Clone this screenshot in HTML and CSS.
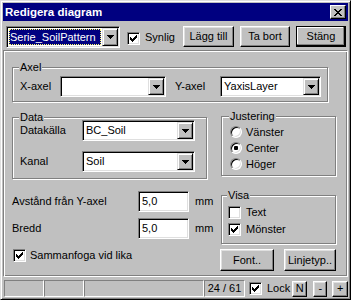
FILE: index.html
```html
<!DOCTYPE html>
<html lang="sv">
<head>
<meta charset="utf-8">
<title>Redigera diagram</title>
<link rel="stylesheet" href="styles.css">
</head>
<body>
<div class="window">
  <div class="titlebar">
    <span class="title">Redigera diagram</span>
    <span class="capbtn"><svg width="8" height="7" viewBox="0 0 8 7" shape-rendering="crispEdges"><path d="M0 0h2v1H0zM6 0h2v1H6zM1 1h2v1H1zM5 1h2v1H5zM2 2h4v1H2zM3 3h2v1H3zM2 4h4v1H2zM1 5h2v1H1zM5 5h2v1H5zM0 6h2v1H0zM6 6h2v1H6z"/></svg></span>
  </div>

  <div class="toolbar">
    <div class="combo combo-series">
      <span class="combo-text sel">Serie_SoilPattern</span>
      <span class="dd"><svg width="7" height="4" viewBox="0 0 7 4" shape-rendering="crispEdges"><path d="M0 0h7v1H0zM1 1h5v1H1zM2 2h3v1H2zM3 3h1v1H3z"/></svg></span>
    </div>
    <span class="cb cb-synlig"><svg width="7" height="7" viewBox="0 0 7 7" shape-rendering="crispEdges"><path d="M6 0h1v1H6zM5 1h2v1H5zM0 2h1v1H0zM4 2h3v1H4zM0 3h2v1H0zM3 3h3v1H3zM0 4h5v1H0zM1 5h3v1H1zM2 6h1v1H2z"/></svg></span>
    <span class="synlig-text">Synlig</span>
    <button class="btn btn-add">Lägg till</button>
    <button class="btn btn-del">Ta bort</button>
    <button class="btn btn-close default">Stäng</button>
  </div>

  <div class="panel">
    <div class="group g-axel">
      <div class="gtitle gt-axel">Axel</div>
      <div class="grow">
        <span class="lbl lbl-x">X-axel</span>
        <div class="combo c-x"><span class="combo-text"></span><span class="dd"><svg width="7" height="4" viewBox="0 0 7 4" shape-rendering="crispEdges"><path d="M0 0h7v1H0zM1 1h5v1H1zM2 2h3v1H2zM3 3h1v1H3z"/></svg></span></div>
        <span class="lbl lbl-y">Y-axel</span>
        <div class="combo c-y"><span class="combo-text">YaxisLayer</span><span class="dd"><svg width="7" height="4" viewBox="0 0 7 4" shape-rendering="crispEdges"><path d="M0 0h7v1H0zM1 1h5v1H1zM2 2h3v1H2zM3 3h1v1H3z"/></svg></span></div>
      </div>
    </div>

    <div class="row2">
      <div class="group g-data">
        <div class="gtitle gt-data">Data</div>
        <div class="grow">
          <span class="lbl lbl-data">Datakälla</span>
          <div class="combo c-data"><span class="combo-text">BC_Soil</span><span class="dd"><svg width="7" height="4" viewBox="0 0 7 4" shape-rendering="crispEdges"><path d="M0 0h7v1H0zM1 1h5v1H1zM2 2h3v1H2zM3 3h1v1H3z"/></svg></span></div>
        </div>
        <div class="grow grow-2">
          <span class="lbl lbl-data">Kanal</span>
          <div class="combo c-data"><span class="combo-text">Soil</span><span class="dd"><svg width="7" height="4" viewBox="0 0 7 4" shape-rendering="crispEdges"><path d="M0 0h7v1H0zM1 1h5v1H1zM2 2h3v1H2zM3 3h1v1H3z"/></svg></span></div>
        </div>
      </div>

      <div class="group g-just">
        <div class="gtitle gt-just">Justering</div>
        <div class="rrow"><span class="radio"></span><span class="rtext">Vänster</span></div>
        <div class="rrow"><span class="radio on"></span><span class="rtext">Center</span></div>
        <div class="rrow"><span class="radio"></span><span class="rtext">Höger</span></div>
      </div>
    </div>

    <div class="row3">
      <div class="leftcol">
        <div class="frow">
          <span class="flabel">Avstånd från Y-axel</span>
          <div class="field">5,0</div>
          <span class="unit">mm</span>
        </div>
        <div class="frow frow-2">
          <span class="flabel">Bredd</span>
          <div class="field">5,0</div>
          <span class="unit">mm</span>
        </div>
        <div class="crow">
          <span class="cb"><svg width="7" height="7" viewBox="0 0 7 7" shape-rendering="crispEdges"><path d="M6 0h1v1H6zM5 1h2v1H5zM0 2h1v1H0zM4 2h3v1H4zM0 3h2v1H0zM3 3h3v1H3zM0 4h5v1H0zM1 5h3v1H1zM2 6h1v1H2z"/></svg></span>
          <span class="ctext">Sammanfoga vid lika</span>
        </div>
      </div>

      <div class="rightcol">
        <div class="group g-visa">
          <div class="gtitle gt-visa">Visa</div>
          <div class="vrow"><span class="cb"></span><span class="vtext">Text</span></div>
          <div class="vrow"><span class="cb"><svg width="7" height="7" viewBox="0 0 7 7" shape-rendering="crispEdges"><path d="M6 0h1v1H6zM5 1h2v1H5zM0 2h1v1H0zM4 2h3v1H4zM0 3h2v1H0zM3 3h3v1H3zM0 4h5v1H0zM1 5h3v1H1zM2 6h1v1H2z"/></svg></span><span class="vtext">Mönster</span></div>
        </div>
        <div class="brow">
          <button class="btn btn-font">Font..</button>
          <button class="btn btn-line">Linjetyp..</button>
        </div>
      </div>
    </div>
  </div>

  <div class="statusbar">
    <span class="sp sp-1"></span>
    <span class="sp sp-2"></span>
    <span class="sp sp-3"></span>
    <span class="sp sp-4">24 / 61</span>
    <span class="cb cb-lock"><svg width="7" height="7" viewBox="0 0 7 7" shape-rendering="crispEdges"><path d="M6 0h1v1H6zM5 1h2v1H5zM0 2h1v1H0zM4 2h3v1H4zM0 3h2v1H0zM3 3h3v1H3zM0 4h5v1H0zM1 5h3v1H1zM2 6h1v1H2z"/></svg></span>
    <span class="lock-text">Lock</span>
    <button class="btn sbtn sb-n">N</button>
    <button class="btn sbtn sb-minus">-</button>
    <button class="btn sbtn sb-plus">+</button>
  </div>
</div>
</body>
</html>
```

FILE: styles.css
```css
* { box-sizing: border-box; }
html, body { margin: 0; padding: 0; }
body {
  background: #c0c0c0;
  font-family: "Liberation Sans", Arial, sans-serif;
  font-size: 11px;
  line-height: 13px;
  color: #000;
}

.window {
  width: 351px;
  height: 300px;
  border: 1px solid;
  border-color: #dfdfdf #000 #000 #dfdfdf;
  box-shadow: inset 1px 1px #fff, inset -1px -1px #808080;
  padding: 2px;
  display: flex;
  flex-direction: column;
  background: #c0c0c0;
}

/* title bar */
.titlebar {
  height: 18px;
  flex: none;
  background: #000080;
  color: #fff;
  display: flex;
  align-items: center;
  justify-content: space-between;
  padding: 0 2px 0 2px;
}
.title { font-weight: bold; font-size: 11.5px; }
.capbtn {
  width: 16px;
  height: 14px;
  background: #c0c0c0;
  border: 1px solid;
  border-color: #fff #000 #000 #fff;
  box-shadow: inset -1px -1px #808080;
  display: flex;
  align-items: center;
  justify-content: center;
}
svg { display: block; }

/* toolbar */
.toolbar {
  height: 29px;
  flex: none;
  display: flex;
  align-items: flex-start;
  padding: 5px 0 0 3px;
}

/* combo */
.combo {
  display: flex;
  height: 21px;
  flex: none;
  background: #fff;
  border: 1px solid;
  border-color: #808080 #fff #fff #808080;
  box-shadow: inset 1px 1px #000, inset -1px -1px #dfdfdf;
  padding: 1px;
}
.combo-text {
  flex: 1;
  display: flex;
  align-items: center;
  padding-left: 2px;
  white-space: nowrap;
  overflow: hidden;
}
.combo-text.sel {
  margin: 1px 1px 1px 1px;
  padding-left: 0;
  background: #000080;
  color: #fff;
  border: 1px dotted #ffff66;
}
.dd {
  width: 16px;
  flex: none;
  background: #c0c0c0;
  border: 1px solid;
  border-color: #dfdfdf #000 #000 #dfdfdf;
  box-shadow: inset 1px 1px #fff, inset -1px -1px #808080;
  display: flex;
  align-items: center;
  justify-content: center;
}
.combo-series { width: 114px; height: 22px; }
.c-x { width: 106px; }
.c-y { width: 101px; }
.c-data { width: 113px; }

/* checkbox */
.cb {
  width: 13px;
  height: 13px;
  flex: none;
  background: #fff;
  border: 1px solid;
  border-color: #808080 #fff #fff #808080;
  box-shadow: inset 1px 1px #000, inset -1px -1px #dfdfdf;
  display: flex;
  align-items: center;
  justify-content: center;
}
.cb-synlig { margin: 6px 0 0 7px; }
.synlig-text { margin: 5px 0 0 5px; line-height: 13px; }

/* radio */
.radio {
  width: 12px;
  height: 12px;
  flex: none;
  border-radius: 50%;
  background: #fff;
  border: 1px solid;
  border-color: #808080 #fff #fff #808080;
  box-shadow: inset 1px 1px #000, inset -1px -1px #dfdfdf;
  display: flex;
  align-items: center;
  justify-content: center;
}
.radio.on::after {
  content: "";
  width: 4px;
  height: 4px;
  border-radius: 1px;
  background: #000;
}

/* buttons */
.btn {
  font: inherit;
  color: #000;
  background: #c0c0c0;
  border: 1px solid;
  border-color: #fff #000 #000 #fff;
  box-shadow: inset -1px -1px #808080, inset 1px 1px #dfdfdf;
  padding: 0;
  height: 21px;
  flex: none;
  display: flex;
  align-items: center;
  justify-content: center;
}
.btn.default {
  border-color: #000;
  box-shadow: inset -1px -1px #000, inset -2px -2px #808080, inset 1px 1px #fff;
}
.btn-add { width: 51px; margin-left: 8px; }
.btn-del { width: 50px; margin-left: 6px; }
.btn-close { width: 50px; margin-left: 6px; }

/* main panel */
.panel {
  height: 227px;
  flex: none;
  border: 1px solid;
  border-color: #808080 #fff #fff #808080;
  box-shadow: inset 1px 1px #fff, inset -1px -1px #808080;
  padding: 16px 0 0 8px;
  display: flex;
  flex-direction: column;
  align-items: flex-start;
}

/* group boxes */
.group {
  flex: none;
  border: 1px solid #808080;
  box-shadow: inset 1px 1px #fff, 1px 1px #fff;
}
.gtitle {
  display: table;
  height: 13px;
  margin: -7px 0 0 -1px;
  padding: 0 1px;
  background: #c0c0c0;
}
.gt-axel { margin-bottom: 2px; }
.gt-data { margin-bottom: -4px; }
.gt-just { margin-bottom: 1px; }
.gt-visa { margin-bottom: 2px; }

.g-axel { width: 316px; height: 35px; padding: 0 0 0 7px; }
.grow { display: flex; align-items: center; height: 21px; }
.lbl-x { width: 40px; }
.lbl-y { width: 45px; margin-left: 9px; }

.row2 { display: flex; align-items: flex-start; margin-top: 14px; }
.g-data { width: 195px; height: 62px; margin-top: 1px; padding: 0 0 0 7px; }
.lbl-data { width: 62px; }
.grow-2 { margin-top: 10px; }

.g-just { width: 115px; height: 60px; margin-left: 14px; padding: 0 0 0 8px; }
.rrow { display: flex; align-items: center; height: 16px; }
.rtext { margin-left: 4px; }

.row3 { display: flex; align-items: flex-start; }
.leftcol { width: 208px; padding-top: 12px; display: flex; flex-direction: column; }
.frow { display: flex; align-items: center; height: 21px; }
.frow-2 { margin-top: 6px; }
.flabel { width: 126px; }
.field {
  width: 51px;
  height: 21px;
  background: #fff;
  border: 1px solid;
  border-color: #808080 #fff #fff #808080;
  box-shadow: inset 1px 1px #000, inset -1px -1px #dfdfdf;
  padding: 0 0 0 3px;
  display: flex;
  align-items: center;
}
.unit { margin-left: 6px; }
.crow { display: flex; align-items: center; height: 13px; margin-top: 10px; padding-left: 1px; }
.ctext { margin-left: 4px; }

.rightcol { width: 116px; display: flex; flex-direction: column; }
.g-visa { width: 115px; height: 49px; margin: 16px 0 0 1px; padding: 0 0 0 6px; }
.vrow { display: flex; align-items: center; height: 17px; }
.vtext { margin-left: 5px; }
.brow { display: flex; margin-top: 5px; }
.btn-font { width: 54px; height: 22px; }
.btn-line { width: 52px; height: 22px; margin-left: 10px; }

/* status bar */
.statusbar {
  height: 20px;
  flex: none;
  display: flex;
  align-items: center;
  padding: 3px 0 0 1px;
}
.sp {
  height: 17px;
  flex: none;
  border: 1px solid;
  border-color: #808080 #fff #fff #808080;
  display: flex;
  align-items: center;
  justify-content: center;
}
.sp-1 { width: 40px; }
.sp-2 { width: 40px; }
.sp-3 { width: 120px; }
.sp-4 { width: 41px; }
.cb-lock { margin-left: 4px; }
.lock-text { margin-left: 5px; }
.sbtn { height: 16px; }
.sb-n { width: 15px; margin-left: 2px; }
.sb-minus { width: 14px; margin-left: 6px; }
.sb-plus { width: 16px; margin-left: 5px; }
```
